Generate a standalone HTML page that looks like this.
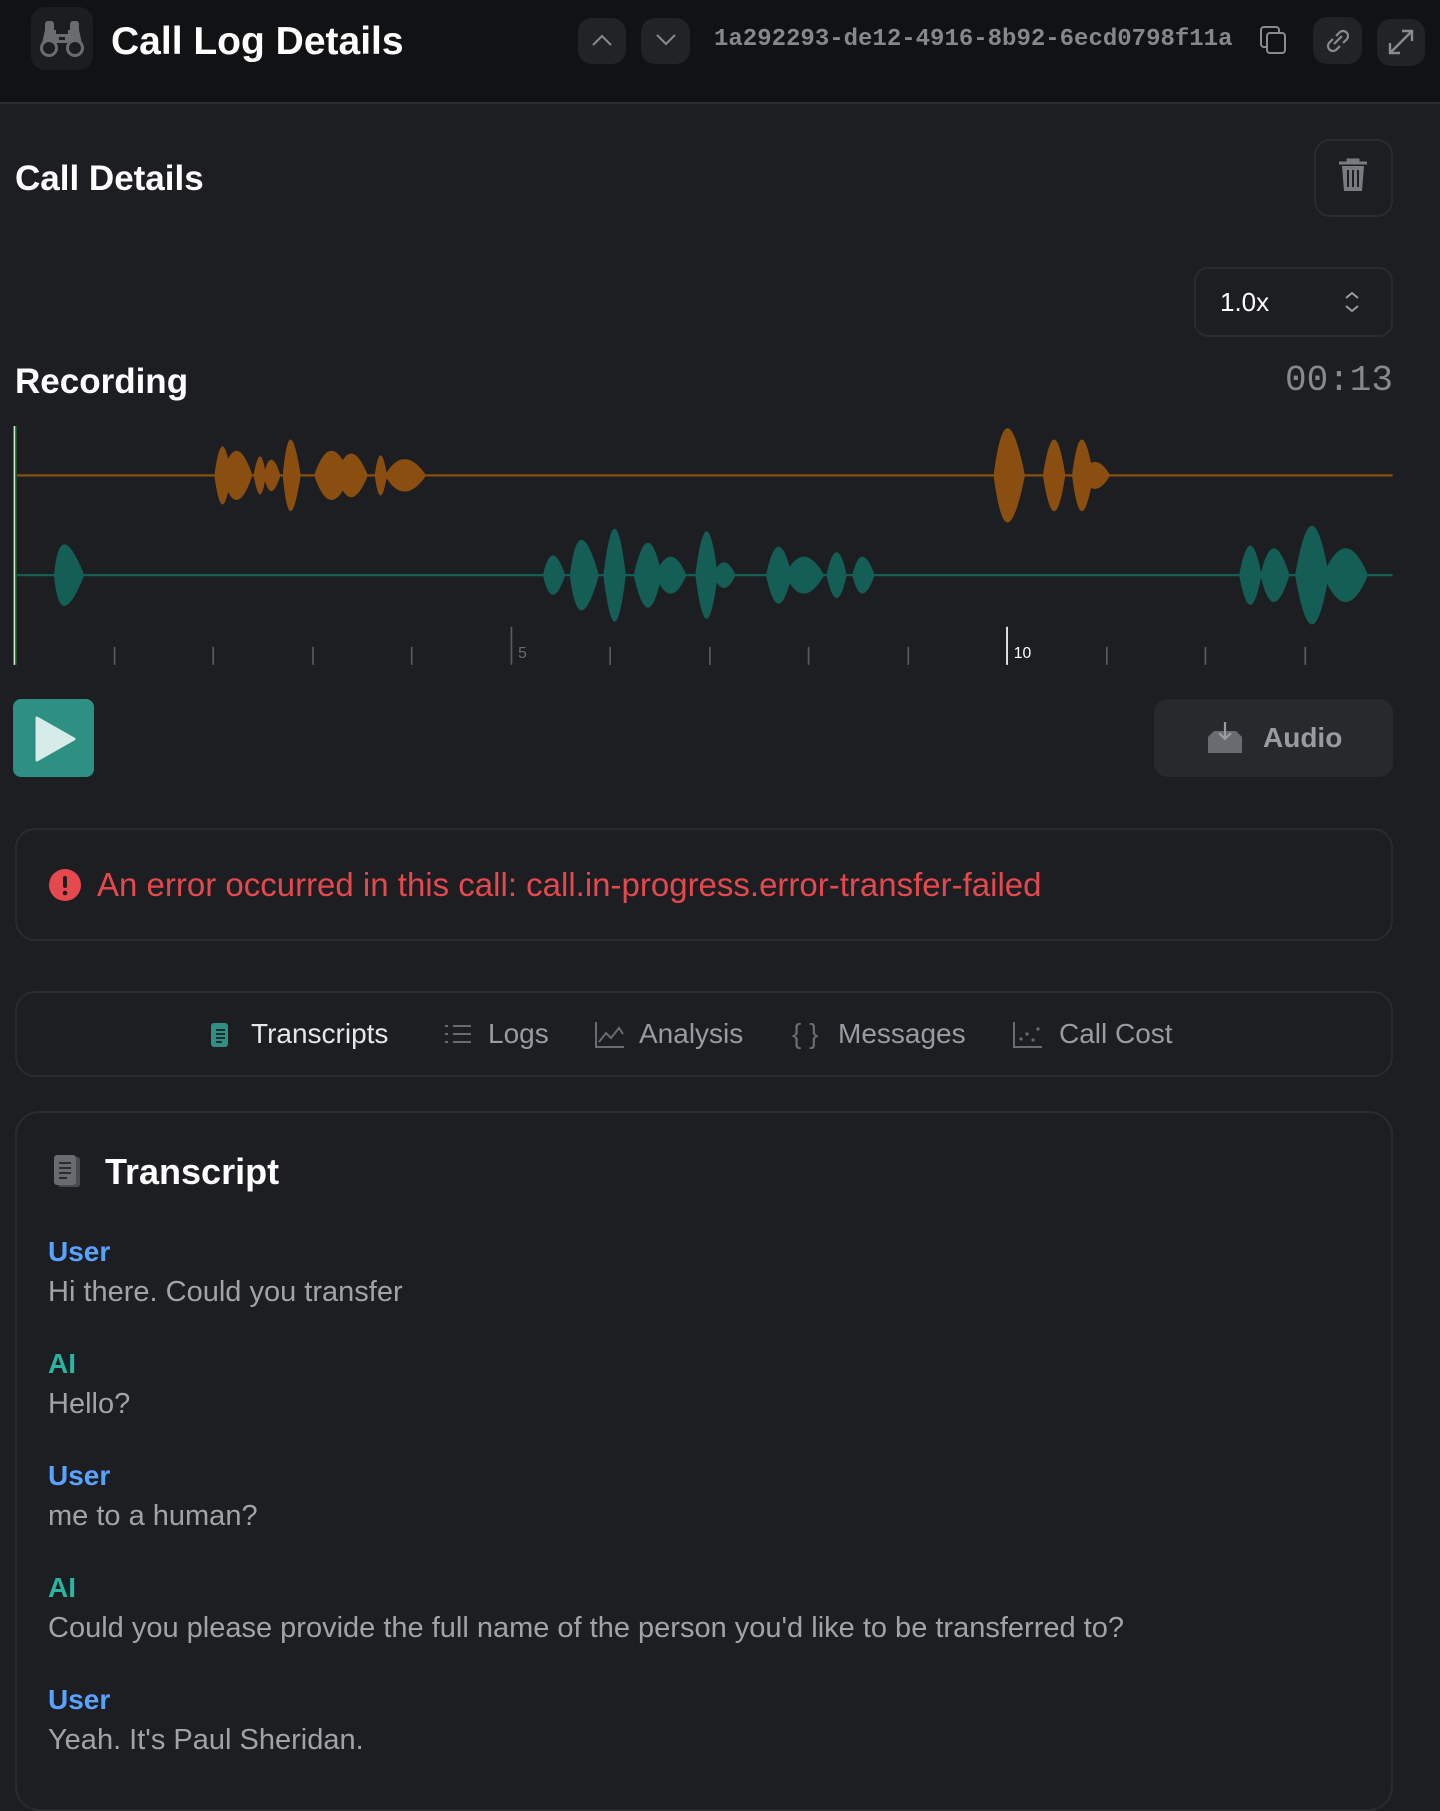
<!DOCTYPE html>
<html><head><meta charset="utf-8"><style>
*{box-sizing:border-box;margin:0;padding:0}
body{width:1440px;height:1758px;background:#1d1e22;font-family:"Liberation Sans",sans-serif;position:relative;overflow:hidden;color:#fff}
.a{position:absolute}
.hdr{left:0;top:0;width:1440px;height:104px;background:#111214;border-bottom:2px solid #2c2d31}
.btn{background:#222326;border-radius:14px}
.mono{font-family:"Liberation Mono",monospace}
.box{border:2px solid #2a2b2f;border-radius:20px}
.tab{top:1017px;font-size:28px;color:#9a9ba0;line-height:34px}
.lbl{left:48px;font-size:28px;font-weight:bold;line-height:32px}
.u{color:#5aa2ff}.ai{color:#2bb5a0}
.txt{left:48px;font-size:29px;color:#a2a3a7;line-height:34px}
</style></head><body>
<div class="a hdr"></div>
<div class="a btn" style="left:31px;top:7px;width:62px;height:63px;background:#1c1d20"></div>
<svg class="a" style="left:36px;top:18px" width="52" height="42" viewBox="0 0 52 42"><g fill="#6b6c70"><rect x="9" y="3" width="9" height="12" rx="3"/><rect x="34" y="3" width="9" height="12" rx="3"/><path d="M5 30L9 12h11v18zM47 30L43 12H32v18z"/><rect x="19" y="16" width="14" height="9"/></g><circle cx="13" cy="30" r="9" fill="#6b6c70"/><circle cx="39" cy="30" r="9" fill="#6b6c70"/><circle cx="13" cy="30" r="6" fill="#1c1d20"/><circle cx="39" cy="30" r="6" fill="#1c1d20"/><rect x="23" y="19" width="6" height="3" fill="#1c1d20"/></svg>
<div class="a" style="left:111px;top:19px;font-size:39px;font-weight:bold;line-height:46px">Call Log Details</div>
<div class="a btn" style="left:578px;top:18px;width:48px;height:46px"></div>
<svg class="a" style="left:590px;top:30px" width="24" height="20"><path d="M3 15L12 6l9 9" stroke="#8a8b90" stroke-width="2" fill="none"/></svg>
<div class="a btn" style="left:641px;top:18px;width:49px;height:46px"></div>
<svg class="a" style="left:654px;top:30px" width="24" height="20"><path d="M3 5l9 9 9-9" stroke="#8a8b90" stroke-width="2" fill="none"/></svg>
<div class="a mono" style="left:714px;top:24px;font-size:24px;color:#85878b;line-height:32px;font-weight:bold">1a292293-de12-4916-8b92-6ecd0798f11a</div>
<svg class="a" style="left:1258px;top:24px" width="32" height="32"><rect x="3" y="3" width="18" height="20" rx="3" stroke="#8a8b90" stroke-width="2" fill="none"/><rect x="9" y="9" width="18" height="20" rx="3" stroke="#8a8b90" stroke-width="2" fill="#111214"/></svg>
<div class="a btn" style="left:1313px;top:17px;width:49px;height:47px"></div>
<svg class="a" style="left:1322px;top:26px" width="32" height="30"><g stroke="#8a8b90" stroke-width="2.2" fill="none"><path d="M14 10l4-4a5 5 0 017 7l-4 4"/><path d="M18 20l-4 4a5 5 0 01-7-7l4-4"/><path d="M12 18l8-8"/></g></svg>
<div class="a btn" style="left:1377px;top:19px;width:48px;height:47px"></div>
<svg class="a" style="left:1385px;top:26px" width="32" height="32"><g stroke="#8a8b90" stroke-width="2.4" fill="none"><path d="M5 27L27 5M17 5h10v10M5 17v10h10"/></g></svg>

<div class="a" style="left:15px;top:159px;font-size:35px;font-weight:bold;line-height:40px">Call Details</div>
<div class="a box" style="left:1314px;top:139px;width:79px;height:78px;border-radius:16px"></div>
<svg class="a" style="left:1336px;top:157px" width="34" height="40"><path d="M3 6h28M12 6V3h10v3" stroke="#7a7b80" stroke-width="3" fill="none"/><path d="M6 9h22l-2 25H8z" fill="#7a7b80"/><path d="M12 13v17M17 13v17M22 13v17" stroke="#1d1e22" stroke-width="2"/></svg>
<div class="a box" style="left:1194px;top:267px;width:199px;height:70px;border-radius:14px"></div>
<div class="a" style="left:1220px;top:287px;font-size:26px;line-height:30px">1.0x</div>
<svg class="a" style="left:1343px;top:290px" width="18" height="24"><path d="M3 8l6-5 6 5M3 16l6 5 6-5" stroke="#9a9ba0" stroke-width="2" fill="none"/></svg>
<div class="a" style="left:15px;top:362px;font-size:35px;font-weight:bold;line-height:40px">Recording</div>
<div class="a mono" style="right:47px;top:360px;font-size:36px;color:#88898d;line-height:42px">00:13</div>

<svg class="a" style="left:0;top:0" width="1440" height="1758" viewBox="0 0 1284 1568">
<line x1="15" y1="424" x2="1242" y2="424" stroke="#8a4f10" stroke-width="2"/>
<line x1="15" y1="513" x2="1242" y2="513" stroke="#145e55" stroke-width="2"/>
<g fill="#8a4f10">
<path d="M191 424Q198 372 206 424Q198 476 191 424Z"/><path d="M198 424Q210 380 225 424Q210 468 198 424Z"/>
<path d="M226 424Q232 390 237 424Q232 458 226 424Z"/><path d="M235 424Q241 396 250 424Q241 452 235 424Z"/>
<path d="M252 424Q258 360 268 424Q258 488 252 424Z"/>
<path d="M280 424Q295 380 312 424Q295 468 280 424Z"/><path d="M300 424Q312 385 328 424Q312 463 300 424Z"/>
<path d="M334 424Q339 388 345 424Q339 460 334 424Z"/><path d="M343 424Q360 395 380 424Q360 453 343 424Z"/>
<path d="M886 424Q897 340 914 424Q897 508 886 424Z"/>
<path d="M930 424Q940 360 950 424Q940 488 930 424Z"/>
<path d="M956 424Q964 360 975 424Q964 488 956 424Z"/><path d="M964 424Q976 400 990 424Q976 448 964 424Z"/>
</g>
<g fill="#145e55">
<path d="M48 513Q53 458 75 513Q53 568 48 513Z"/>
<path d="M484 513Q492 478 504 513Q492 548 484 513Z"/>
<path d="M508 513Q516 450 534 513Q516 576 508 513Z"/>
<path d="M538 513Q548 430 558 513Q548 596 538 513Z"/>
<path d="M565 513Q578 455 590 513Q578 571 565 513Z"/><path d="M584 513Q598 480 612 513Q598 546 584 513Z"/>
<path d="M620 513Q630 435 640 513Q630 591 620 513Z"/><path d="M636 513Q645 490 656 513Q645 536 636 513Z"/>
<path d="M683 513Q694 462 706 513Q694 564 683 513Z"/><path d="M700 513Q716 480 735 513Q716 546 700 513Z"/>
<path d="M737 513Q746 472 755 513Q746 554 737 513Z"/><path d="M760 513Q768 480 780 513Q768 546 760 513Z"/>
<path d="M1105 513Q1115 460 1125 513Q1115 566 1105 513Z"/><path d="M1124 513Q1135 465 1150 513Q1135 561 1124 513Z"/>
<path d="M1155 513Q1170 425 1185 513Q1170 601 1155 513Z"/><path d="M1180 513Q1200 465 1220 513Q1200 561 1180 513Z"/>
</g>
<line x1="13.5" y1="380" x2="13.5" y2="593" stroke="#1f8a2a" stroke-width="2"/>
<line x1="12.5" y1="380" x2="12.5" y2="593" stroke="#fff" stroke-width="1"/>
<g stroke="#5a5b60" stroke-width="1.5">
<path d="M102 577v16M190 577v16M279 577v16M367 577v16M456 559v34M544 577v16M633 577v16M721 577v16M810 577v16M987 577v16M1075 577v16M1164 577v16"/></g>
<path d="M898 559v34" stroke="#fff" stroke-width="1.5"/>
<text x="462" y="587" fill="#6a6b70" font-size="14" font-family="Liberation Sans">5</text>
<text x="904" y="587" fill="#fff" font-size="14" font-family="Liberation Sans">10</text>
</svg>

<div class="a" style="left:13px;top:699px;width:81px;height:78px;background:#2e8f83;border-radius:8px"></div>
<svg class="a" style="left:32px;top:714px" width="48" height="50"><path d="M5 4L42 25 5 46z" fill="#d6ece8" stroke="#d6ece8" stroke-width="3" stroke-linejoin="round"/></svg>
<div class="a" style="left:1154px;top:699px;width:239px;height:78px;background:#28292d;border-radius:14px"></div>
<svg class="a" style="left:1206px;top:721px" width="38" height="34"><path d="M2 16l6-6h22l6 6v16H2z" fill="#6a6b70"/><path d="M19 1v17M13 12l6 6 6-6" stroke="#9a9ba0" stroke-width="2.2" fill="none"/></svg>
<div class="a" style="left:1263px;top:721px;font-size:28px;font-weight:bold;color:#9a9ba0;line-height:34px">Audio</div>

<div class="a box" style="left:15px;top:828px;width:1378px;height:113px"></div>
<svg class="a" style="left:48px;top:868px" width="34" height="34"><circle cx="17" cy="17" r="16" fill="#e5484d"/><rect x="15" y="8" width="4" height="12" rx="2" fill="#1d1e22"/><circle cx="17" cy="25" r="2.3" fill="#1d1e22"/></svg>
<div class="a" style="left:97px;top:865px;font-size:33px;color:#e5484d;line-height:40px">An error occurred in this call: call.in-progress.error-transfer-failed</div>

<div class="a box" style="left:15px;top:991px;width:1378px;height:86px"></div>
<svg class="a" style="left:208px;top:1020px" width="24" height="30"><rect x="3" y="3" width="17" height="24" rx="3" fill="#2e8f83"/><path d="M8 10h9M8 14h9M8 18h9M8 22h6" stroke="#1d1e22" stroke-width="1.8"/></svg>
<div class="a tab" style="left:251px;color:#e6e7ea">Transcripts</div>
<svg class="a" style="left:443px;top:1022px" width="30" height="26"><g stroke="#6a6b70" stroke-width="2"><path d="M2 4h3M10 4h18M2 12h3M10 12h18M2 20h3M10 20h18"/></g></svg>
<div class="a tab" style="left:488px">Logs</div>
<svg class="a" style="left:594px;top:1020px" width="32" height="30"><path d="M2 2v25h28" stroke="#6a6b70" stroke-width="2" fill="none"/><path d="M5 22l7-9 5 5 8-10 4 6" stroke="#6a6b70" stroke-width="2" fill="none"/></svg>
<div class="a tab" style="left:639px">Analysis</div>
<div class="a tab" style="left:792px;color:#6a6b70;font-size:28px">{ }</div>
<div class="a tab" style="left:838px">Messages</div>
<svg class="a" style="left:1012px;top:1020px" width="32" height="30"><path d="M2 2v25h28" stroke="#6a6b70" stroke-width="2" fill="none"/><g fill="#6a6b70"><circle cx="9" cy="19" r="1.6"/><circle cx="15" cy="14" r="1.6"/><circle cx="21" cy="20" r="1.6"/><circle cx="26" cy="9" r="1.6"/></g></svg>
<div class="a tab" style="left:1059px">Call Cost</div>

<div class="a box" style="left:15px;top:1111px;width:1378px;height:700px;border-radius:24px"></div>
<svg class="a" style="left:52px;top:1153px" width="32" height="38"><rect x="6" y="4" width="22" height="30" rx="3" fill="#4a4b50"/><rect x="2" y="2" width="22" height="30" rx="3" fill="#6a6b70"/><path d="M7 10h12M7 15h12M7 20h12M7 25h8" stroke="#2a2b2f" stroke-width="2"/></svg>
<div class="a" style="left:105px;top:1151px;font-size:36px;font-weight:bold;line-height:42px">Transcript</div>
<div class="a lbl u" style="top:1236px">User</div>
<div class="a txt" style="top:1275px">Hi there. Could you transfer</div>
<div class="a lbl ai" style="top:1348px">AI</div>
<div class="a txt" style="top:1387px">Hello?</div>
<div class="a lbl u" style="top:1460px">User</div>
<div class="a txt" style="top:1499px">me to a human?</div>
<div class="a lbl ai" style="top:1572px">AI</div>
<div class="a txt" style="top:1611px">Could you please provide the full name of the person you'd like to be transferred to?</div>
<div class="a lbl u" style="top:1684px">User</div>
<div class="a txt" style="top:1723px">Yeah. It's Paul Sheridan.</div>
</body></html>
